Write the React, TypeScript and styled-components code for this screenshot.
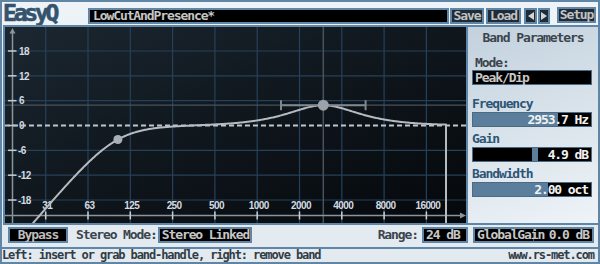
import React from 'react';
import styled, { createGlobalStyle } from 'styled-components';

const BLUE = '#5f86a6';
const MONO = `'DejaVu Sans Mono', 'Liberation Mono', monospace`;

const F0 = 2953.7;
const GAIN = 4.9;
const BW = 2;
const LOW_FC = 98;
const LOW_Q = 0.65;

const FREQS = [31, 63, 125, 250, 500, 1000, 2000, 4000, 8000, 16000];
const DBS = [18, 12, 6, 0, -6, -12, -18];

const xOf = (f: number) => 45.7 + 42.3 * Math.log2(f / 31.25);
const fOf = (x: number) => 31.25 * Math.pow(2, (x - 45.7) / 42.3);
const yOf = (db: number) => 125.5 - 4.14 * db;
const tickX = (i: number) => 45.7 + 42.3 * i;

function responseDb(f: number) {
  const r2 = (f / LOW_FC) ** 2;
  const hp = 10 * Math.log10((r2 * r2) / ((1 - r2) ** 2 + r2 / (LOW_Q * LOW_Q)));
  const w = f / F0;
  const A = Math.pow(10, GAIN / 40);
  const Q = Math.sqrt(Math.pow(2, BW)) / (Math.pow(2, BW) - 1);
  const re = 1 - w * w;
  const pk = 10 * Math.log10((re * re + (w * A / Q) ** 2) / (re * re + (w / (A * Q)) ** 2));
  return hp + pk;
}

const GlobalStyle = createGlobalStyle`
  html, body {
    margin: 0;
    padding: 0;
    background: #ffffff;
  }
  * {
    box-sizing: border-box;
  }
`;

const Window = styled.div`
  display: flex;
  flex-direction: column;
  width: 600px;
  height: 264px;
  overflow: hidden;
  border: 2px solid ${BLUE};
  background: linear-gradient(180deg, #eef3f7 0%, #e2e9ef 100%);
  font-family: ${MONO};
  font-weight: bold;
  font-size: 13px;
  letter-spacing: -1.1px;
`;

const Header = styled.div`
  display: flex;
  align-items: flex-start;
  flex: none;
  height: 23px;
`;

const Logo = styled.div`
  width: 85px;
  margin-left: 1px;
  font-size: 23px;
  line-height: 22px;
  letter-spacing: -3.2px;
  color: #34536e;
  -webkit-text-stroke: 0.6px #34536e;
`;

const PresetName = styled.div`
  width: 361px;
  height: 16px;
  margin-top: 6px;
  padding-left: 3px;
  border: 2px solid ${BLUE};
  background: #000;
  color: #c6c6c6;
  line-height: 12px;
  white-space: nowrap;
`;

const HeaderButton = styled.div<{ $w: number; $ml: number; $top?: number }>`
  display: flex;
  align-items: center;
  justify-content: center;
  width: ${({ $w }) => $w}px;
  height: 16px;
  margin-left: ${({ $ml }) => $ml}px;
  margin-top: ${({ $top }) => $top ?? 6}px;
  border: 2px solid ${BLUE};
  background: #1f2c37;
  color: #c2c2c2;
  line-height: 12px;
`;

const Main = styled.div`
  display: flex;
  flex: none;
  height: 200px;
`;

const PlotFrame = styled.div`
  width: 465px;
  height: 200px;
  margin-left: 1px;
  border: 2px solid ${BLUE};
  background: #0c1217;

  & > svg {
    display: block;
  }
`;

const Panel = styled.div`
  display: flex;
  flex-direction: column;
  width: 130px;
  border-top: 2px solid ${BLUE};
  border-bottom: 2px solid ${BLUE};
  background: linear-gradient(160deg, #c2d1dd 0%, #d9e3eb 50%, #eef3f7 100%);
`;

const PanelTitle = styled.div`
  margin-top: 4px;
  line-height: 14px;
  text-align: center;
  color: #3c454d;
`;

const ParamLabel = styled.div<{ $gap: number; $indent?: number; $dark?: boolean }>`
  margin-top: ${({ $gap }) => $gap}px;
  padding-left: ${({ $indent }) => $indent ?? 4}px;
  line-height: 14px;
  color: ${({ $dark }) => ($dark ? '#3c454d' : '#2e5575')};
`;

const ModeBox = styled.div`
  width: 120px;
  height: 15px;
  margin-left: 4px;
  padding-left: 2px;
  border: 1px solid #4b6b85;
  background: #000;
  color: #c8c8c8;
  line-height: 13px;
`;

const Slider = styled.div<{ $from: number; $to: number }>`
  width: 120px;
  height: 15px;
  margin: 1px 0 0 4px;
  padding-right: 3px;
  border: 1px solid #4b6b85;
  background: linear-gradient(
    to right,
    #000 0 ${({ $from }) => $from}%,
    #5a7e9c ${({ $from }) => $from}% ${({ $to }) => $to}%,
    #000 ${({ $to }) => $to}% 100%
  );
  color: #f2f2f2;
  line-height: 13px;
  text-align: right;
`;

const Controls = styled.div`
  display: flex;
  align-items: flex-start;
  flex: none;
  height: 24px;
  padding-top: 2px;
  border-bottom: 2px solid ${BLUE};
`;

const BypassButton = styled.div`
  width: 60px;
  height: 16px;
  margin-left: 6px;
  border: 2px solid ${BLUE};
  background: #000;
  color: #bdbdbd;
  line-height: 12px;
  text-align: center;
`;

const CtrlLabel = styled.span<{ $ml: number }>`
  margin-left: ${({ $ml }) => $ml}px;
  line-height: 16px;
  color: #3c454d;
  white-space: nowrap;
`;

const ComboBox = styled.div<{ $w: number; $ml: number }>`
  display: flex;
  justify-content: space-between;
  width: ${({ $w }) => $w}px;
  height: 16px;
  margin-left: ${({ $ml }) => $ml}px;
  padding: 0 3px 0 2px;
  border: 2px solid ${BLUE};
  background: #000;
  color: #c6c6c6;
  line-height: 12px;
  white-space: nowrap;
`;

const GainBox = styled(ComboBox)`
  margin-right: 4px;
  background: linear-gradient(
    to right,
    #000 0 50%,
    #46586a 50% calc(50% + 1px),
    #000 calc(50% + 1px) 100%
  );
`;

const Spacer = styled.div`
  flex: 1;
`;

const StatusBar = styled.div`
  display: flex;
  justify-content: space-between;
  flex: none;
  height: 13px;
  padding-right: 4px;
  font-size: 12px;
  letter-spacing: -1.1px;
  line-height: 13px;
  color: #323c45;
  white-space: nowrap;
`;

function Arrow({ left }: { left?: boolean }) {
  return (
    <svg width="6" height="8" viewBox="0 0 6 8">
      <polygon points={left ? '6,0 0,4 6,8' : '0,0 6,4 0,8'} fill="#d4d4d4" />
    </svg>
  );
}

function ResponsePlot() {
  const pts: string[] = [];
  for (let x = 5; x <= 446; x += 1) {
    const y = Math.min(240, yOf(responseDb(fOf(x))));
    pts.push(`${x},${y.toFixed(2)}`);
  }
  const curve = `M${pts.join(' L')} L446,232`;
  const lowF = 102;
  const low = { x: xOf(lowF), y: yOf(responseDb(lowF)) };
  const peak = { x: xOf(F0), y: yOf(responseDb(F0)) };
  const half = 42.3 * (BW / 2);
  const grid = '#27405a';
  const axis = '#8a949c';
  const label = '#d4dbe0';

  return (
    <svg width="461" height="196" viewBox="5 27 461 196">
      <defs>
        <linearGradient id="plotBg" x1="0" y1="0" x2="1" y2="1">
          <stop offset="0" stopColor="#1c2731" />
          <stop offset="0.5" stopColor="#0f161c" />
          <stop offset="1" stopColor="#05080b" />
        </linearGradient>
        <clipPath id="plotClip">
          <rect x="5" y="27" width="461" height="196" />
        </clipPath>
      </defs>
      <rect x="5" y="27" width="461" height="196" fill="url(#plotBg)" />
      <g clipPath="url(#plotClip)">
        {FREQS.map((_, i) => (
          <line key={`v${i}`} x1={tickX(i)} y1="27" x2={tickX(i)} y2="223" stroke={grid} strokeWidth="1.2" />
        ))}
        {DBS.filter((d) => d !== 0).map((d) => (
          <line key={`h${d}`} x1="5" y1={yOf(d)} x2="466" y2={yOf(d)} stroke={grid} strokeWidth="1.2" />
        ))}
        <line x1={peak.x} y1="27" x2={peak.x} y2="223" stroke="#48535d" strokeWidth="1.5" />
        <line x1="5" y1={yOf(GAIN)} x2="466" y2={yOf(GAIN)} stroke="#48535d" strokeWidth="1.2" />

        <line x1="12.5" y1="32" x2="12.5" y2="223" stroke={axis} strokeWidth="1.5" />
        <polygon points="12.5,28 9.5,33.5 15.5,33.5" fill={axis} />
        <line x1="5" y1="215.5" x2="461" y2="215.5" stroke={axis} strokeWidth="1.5" />
        <polygon points="466,215.5 460,212.5 460,218.5" fill={axis} />

        {DBS.map((d) => (
          <g key={`l${d}`}>
            <line x1="8" y1={yOf(d)} x2="16.5" y2={yOf(d)} stroke="#c4ccd2" strokeWidth="1.5" />
            <text
              x={d < 0 ? 18 : 19}
              y={yOf(d) + 3.8}
              fill={label}
              fontFamily="'Liberation Sans', Arial, sans-serif"
              fontSize="10"
              letterSpacing="-0.6"
            >
              {d}
            </text>
          </g>
        ))}
        {FREQS.map((f, i) => (
          <g key={`f${f}`}>
            <line x1={tickX(i)} y1="211.5" x2={tickX(i)} y2="219.5" stroke="#c8d0d6" strokeWidth="1.5" />
            <text
              x={tickX(i) + 1.5}
              y="208.5"
              fill={label}
              textAnchor="middle"
              fontFamily="'Liberation Sans', Arial, sans-serif"
              fontSize="10"
              letterSpacing="-0.6"
            >
              {f}
            </text>
          </g>
        ))}

        <line x1="5" y1="125.5" x2="466" y2="125.5" stroke="#bcc6cd" strokeWidth="2" strokeDasharray="5 3" />

        <path d={curve} fill="none" stroke="#b6bbc1" strokeWidth="2" />

        <g stroke="#7f8891" strokeWidth="2">
          <line x1={peak.x - half} y1={peak.y} x2={peak.x + half} y2={peak.y} />
          <line x1={peak.x - half} y1={peak.y - 5} x2={peak.x - half} y2={peak.y + 5} />
          <line x1={peak.x + half} y1={peak.y - 5} x2={peak.x + half} y2={peak.y + 5} />
        </g>
        <circle cx={low.x} cy={low.y} r="4.5" fill="#a9afb6" />
        <circle cx={peak.x} cy={peak.y} r="5.5" fill="#9ca2aa" />
      </g>
    </svg>
  );
}

export default function App() {
  const freqFill = (Math.log(F0 / 20) / Math.log(1000)) * 100;
  const gainFill = 50 + (GAIN / 48) * 50;

  return (
    <>
      <GlobalStyle />
      <Window>
        <Header>
          <Logo>EasyQ</Logo>
          <PresetName>LowCutAndPresence*</PresetName>
          <HeaderButton $w={34} $ml={1}>Save</HeaderButton>
          <HeaderButton $w={35} $ml={2}>Load</HeaderButton>
          <HeaderButton $w={13} $ml={3}>
            <Arrow left />
          </HeaderButton>
          <HeaderButton $w={12} $ml={1}>
            <Arrow />
          </HeaderButton>
          <HeaderButton $w={39} $ml={7} $top={5}>Setup</HeaderButton>
        </Header>

        <Main>
          <PlotFrame>
            <ResponsePlot />
          </PlotFrame>
          <Panel>
            <PanelTitle>Band Parameters</PanelTitle>
            <ParamLabel $gap={11} $indent={7} $dark>Mode:</ParamLabel>
            <ModeBox>Peak/Dip</ModeBox>
            <ParamLabel $gap={12}>Frequency</ParamLabel>
            <Slider $from={0} $to={freqFill}>2953.7 Hz</Slider>
            <ParamLabel $gap={5}>Gain</ParamLabel>
            <Slider $from={50} $to={gainFill}>4.9 dB</Slider>
            <ParamLabel $gap={5}>Bandwidth</ParamLabel>
            <Slider $from={0} $to={63.5}>2.00 oct</Slider>
          </Panel>
        </Main>

        <Controls>
          <BypassButton>Bypass</BypassButton>
          <CtrlLabel $ml={8}>Stereo Mode:</CtrlLabel>
          <ComboBox $w={94} $ml={1}>Stereo Linked</ComboBox>
          <Spacer />
          <CtrlLabel $ml={0}>Range:</CtrlLabel>
          <ComboBox $w={46} $ml={4}>24 dB</ComboBox>
          <GainBox $w={121} $ml={5}>
            <span>GlobalGain</span>
            <span>0.0 dB</span>
          </GainBox>
        </Controls>

        <StatusBar>
          <span>Left: insert or grab band-handle, right: remove band</span>
          <span>www.rs-met.com</span>
        </StatusBar>
      </Window>
    </>
  );
}
